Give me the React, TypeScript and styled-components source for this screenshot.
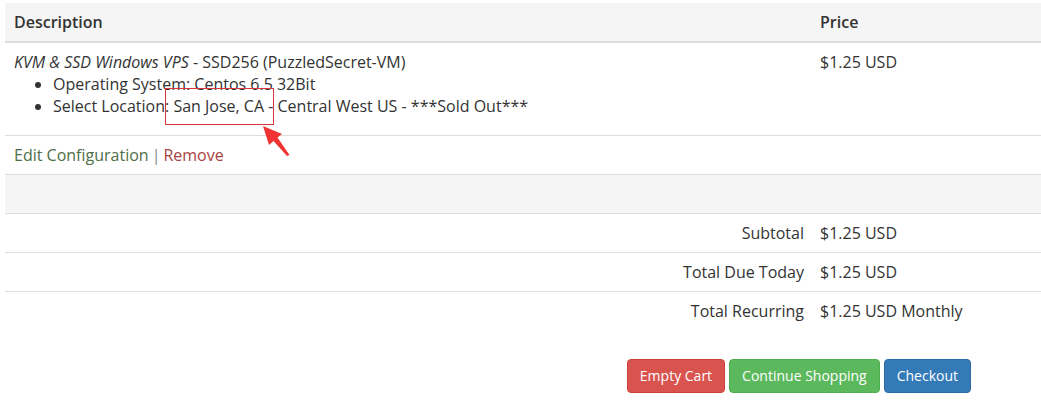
import styled, { createGlobalStyle } from 'styled-components'

const GlobalStyle = createGlobalStyle`
  body {
    margin: 0;
    background: #fff;
    font-family: "Open Sans", "Liberation Sans", sans-serif;
    font-size: 16px;
    line-height: 22px;
    color: #333;
  }
`

const Page = styled.div`
  padding: 3px 0 0 5px;
`

const Table = styled.table`
  width: 100%;
  border-collapse: collapse;
  table-layout: fixed;
`

const HeadRow = styled.tr`
  background: #f5f5f5;

  th {
    text-align: left;
    font-weight: 600;
    padding: 8px 9px;
    border-bottom: 2px solid #ddd;
  }
`

const Row = styled.tr<{ $shaded?: boolean; $last?: boolean }>`
  background: ${p => (p.$shaded ? '#f5f5f5' : 'transparent')};

  td {
    padding: 8px 9px;
    vertical-align: top;
    border-bottom: ${p => (p.$last ? 'none' : '1px solid #ddd')};
    height: 22px;
  }
`

const Label = styled.td`
  text-align: right;

  && {
    padding-right: 7px;
  }
`

const Options = styled.ul`
  margin: 0 0 10px;
  padding-left: 39px;
`

const Highlight = styled.span`
  position: relative;

  &::after {
    content: '';
    position: absolute;
    left: -8px;
    right: -1px;
    top: -7px;
    bottom: -8px;
    border: 1px solid #d9363e;
  }
`

const Arrow = styled.svg`
  position: absolute;
  left: 88px;
  top: 29px;
`

const Success = styled.a`
  color: #4e6e48;
  text-decoration: none;
`

const Danger = styled.a`
  color: #a94442;
  text-decoration: none;
`

const Divider = styled.span`
  color: #888;
  margin: 0 3px;
`

const Actions = styled.div`
  display: flex;
  justify-content: flex-end;
  gap: 4px;
  padding: 29px 70px 0 0;
`

const Button = styled.button<{ $tone: 'danger' | 'success' | 'primary' }>`
  font-family: inherit;
  font-size: 14px;
  line-height: 20px;
  color: #fff;
  border-radius: 4px;
  padding: 6px 12px;
  border: 1px solid transparent;
  background: ${p =>
    p.$tone === 'danger' ? '#d9534f' : p.$tone === 'success' ? '#5cb85c' : '#337ab7'};
  border-color: ${p =>
    p.$tone === 'danger' ? '#d43f3a' : p.$tone === 'success' ? '#4cae4c' : '#2e6da4'};
`

const totals = [
  ['Subtotal', '$1.25 USD'],
  ['Total Due Today', '$1.25 USD'],
  ['Total Recurring', '$1.25 USD Monthly'],
]

export default function App() {
  return (
    <Page>
      <GlobalStyle />
      <Table>
        <colgroup>
          <col />
          <col style={{ width: 230 }} />
        </colgroup>
        <thead>
          <HeadRow>
            <th>Description</th>
            <th>Price</th>
          </HeadRow>
        </thead>
        <tbody>
          <Row>
            <td>
              <em>KVM &amp; SSD Windows VPS</em> - SSD256 (PuzzledSecret-VM)
              <Options>
                <li>Operating System: Centos 6.5 32Bit</li>
                <li>
                  Select Location:{' '}
                  <Highlight>
                    San Jose, CA -
                    <Arrow width="32" height="34" viewBox="0 0 32 34">
                      <path d="M2 2 L21 10 L16.5 13.5 L28.5 31 L26 32 L12.5 17 L8 21 Z" fill="#f03434" />
                    </Arrow>
                  </Highlight>{' '}
                  Central West US - ***Sold Out***
                </li>
              </Options>
            </td>
            <td>$1.25 USD</td>
          </Row>
          <Row>
            <td>
              <Success href="#">Edit Configuration</Success>
              <Divider>|</Divider>
              <Danger href="#">Remove</Danger>
            </td>
            <td />
          </Row>
          <Row $shaded>
            <td />
            <td />
          </Row>
          {totals.map(([label, value], i) => (
            <Row key={label} $last={i === totals.length - 1}>
              <Label>{label}</Label>
              <td>{value}</td>
            </Row>
          ))}
        </tbody>
      </Table>
      <Actions>
        <Button $tone="danger">Empty Cart</Button>
        <Button $tone="success">Continue Shopping</Button>
        <Button $tone="primary">Checkout</Button>
      </Actions>
    </Page>
  )
}
